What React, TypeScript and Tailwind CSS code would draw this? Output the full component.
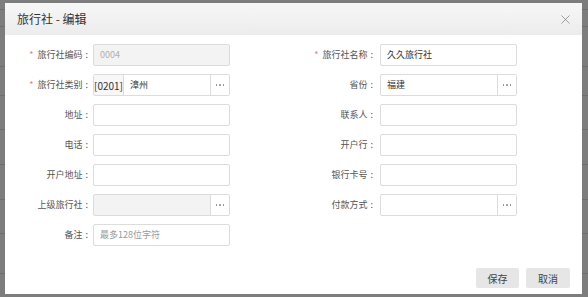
import { X } from 'lucide-react';

const font = { fontFamily: '"Noto Sans CJK SC", "Noto Sans", sans-serif' };

type Field = {
  label: string;
  required?: boolean;
  value?: string;
  placeholder?: string;
  disabled?: boolean;
  picker?: boolean;
  prefix?: string;
};

const rows: [Field, Field | null][] = [
  [
    { label: '旅行社编码', required: true, value: '0004', disabled: true },
    { label: '旅行社名称', required: true, value: '久久旅行社' },
  ],
  [
    { label: '旅行社类别', required: true, value: '漳州', prefix: '[0201]', picker: true },
    { label: '省份', value: '福建', picker: true },
  ],
  [{ label: '地址' }, { label: '联系人' }],
  [{ label: '电话' }, { label: '开户行' }],
  [{ label: '开户地址' }, { label: '银行卡号' }],
  [{ label: '上级旅行社', disabled: true, picker: true }, { label: '付款方式', picker: true }],
  [{ label: '备注', placeholder: '最多128位字符' }, null],
];

function Dots() {
  return (
    <span className="flex w-[19px] shrink-0 items-center justify-center gap-[2px] border-l border-[#dcdcdc] bg-white">
      <i className="block h-[1.5px] w-[1.5px] rounded-full bg-[#888]" />
      <i className="block h-[1.5px] w-[1.5px] rounded-full bg-[#888]" />
      <i className="block h-[1.5px] w-[1.5px] rounded-full bg-[#888]" />
    </span>
  );
}

function FormField({ f, right }: { f: Field; right?: boolean }) {
  return (
    <div className="flex h-[22px] items-center">
      <label
        className={`flex w-[83px] shrink-0 items-center justify-end text-[9px] text-[#555] ${right ? 'mr-[7px]' : 'mr-[5px]'}`}
      >
        {f.required && <span className="mr-[4px] text-[9px] text-[#f07c7c]">*</span>}
        <span>{f.label}</span>
        <span className="ml-[3px]">:</span>
      </label>
      <div
        className={`flex h-[22px] w-[137px] overflow-hidden rounded-[2px] border border-[#dcdcdc] ${f.disabled ? 'bg-[#f3f3f3]' : 'bg-white'}`}
      >
        {f.prefix && (
          <span className="flex w-[30px] shrink-0 items-center justify-center border-r border-[#dcdcdc] bg-[#f7f7f7] text-[10px] text-[#333]">
            {f.prefix}
          </span>
        )}
        <span
          className={`flex flex-1 items-center pl-[6px] text-[9px] ${f.disabled ? 'text-[#b0b0b0]' : 'text-[#333]'}`}
        >
          {f.value ?? <span className="text-[#999]">{f.placeholder}</span>}
        </span>
        {f.picker && <Dots />}
      </div>
    </div>
  );
}

export default function App() {
  return (
    <div className="relative h-[297px] w-[588px] overflow-hidden bg-[#7d7d7d]" style={font}>
      {/* table behind the overlay */}
      <div className="flex flex-col">
        {[10, 17, 40, 29, 34, 35, 35, 34, 40].map((h, i) => (
          <div key={i} className="border-b border-[#6e6e6e]" style={{ height: h }} />
        ))}
      </div>

      <div className="absolute left-[5px] top-[3px] flex h-[291px] w-[577px] flex-col bg-white">
        <div className="flex h-[32px] shrink-0 items-center justify-between bg-gradient-to-b from-[#f7f7f7] to-[#ececec] pl-[12px] pr-[9px]">
          <span className="text-[12px] text-[#333]">旅行社 - 编辑</span>
          <X size={15} strokeWidth={1.1} className="text-[#777]" />
        </div>

        <div className="grid grid-cols-[285px_292px] gap-y-[8px] pt-[9px]">
          {rows.map(([l, r], i) => [
            <FormField key={`l${i}`} f={l} />,
            r ? <FormField key={`r${i}`} f={r} right /> : <div key={`r${i}`} />,
          ])}
        </div>

        <div className="mt-auto flex justify-end gap-[7px] pb-[6px] pr-[12px]">
          <button className="h-[20px] w-[43px] rounded-[2px] bg-[#e6e6e6] text-[10px] text-[#444]">保存</button>
          <button className="h-[20px] w-[44px] rounded-[2px] bg-[#e6e6e6] text-[10px] text-[#444]">取消</button>
        </div>
      </div>
    </div>
  );
}
